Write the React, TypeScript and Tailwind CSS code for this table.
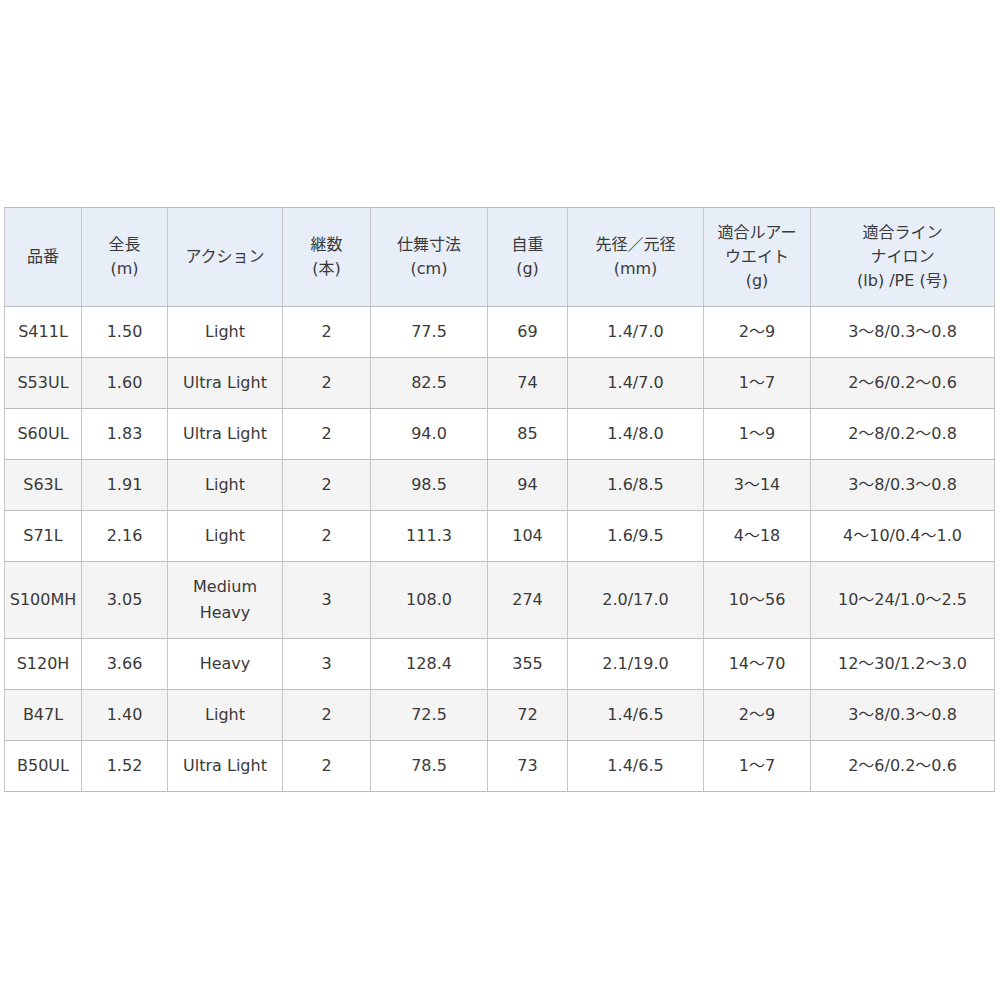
const rows = [
    ['S411L', '1.50', 'Light', '2', '77.5', '69', '1.4/7.0', '2～9', '3～8/0.3～0.8'],
    ['S53UL', '1.60', 'Ultra Light', '2', '82.5', '74', '1.4/7.0', '1～7', '2～6/0.2～0.6'],
    ['S60UL', '1.83', 'Ultra Light', '2', '94.0', '85', '1.4/8.0', '1～9', '2～8/0.2～0.8'],
    ['S63L', '1.91', 'Light', '2', '98.5', '94', '1.6/8.5', '3～14', '3～8/0.3～0.8'],
    ['S71L', '2.16', 'Light', '2', '111.3', '104', '1.6/9.5', '4～18', '4～10/0.4～1.0'],
    ['S100MH', '3.05', 'Medium\nHeavy', '3', '108.0', '274', '2.0/17.0', '10～56', '10～24/1.0～2.5'],
    ['S120H', '3.66', 'Heavy', '3', '128.4', '355', '2.1/19.0', '14～70', '12～30/1.2～3.0'],
    ['B47L', '1.40', 'Light', '2', '72.5', '72', '1.4/6.5', '2～9', '3～8/0.3～0.8'],
    ['B50UL', '1.52', 'Ultra Light', '2', '78.5', '73', '1.4/6.5', '1～7', '2～6/0.2～0.6'],
];

const headers = [
    ['品番'],
    ['全長', '(m)'],
    ['アクション'],
    ['継数', '(本)'],
    ['仕舞寸法', '(cm)'],
    ['自重', '(g)'],
    ['先径／元径', '(mm)'],
    ['適合ルアー', 'ウエイト', '(g)'],
    ['適合ライン', 'ナイロン', '(lb) /PE (号)'],
];

const widths = ['w-[77px]', 'w-[86px]', 'w-[115px]', 'w-[88px]', 'w-[117px]', 'w-[80px]', 'w-[136px]', 'w-[107px]', 'w-[184px]'];

const cell = 'border-x border-solid border-x-[#c6c6c6] border-y border-y-dotted border-y-[#bdbdbd] p-0 text-center align-middle';

export default function App() {
    return (
        <div className="min-h-[1000px] bg-white pt-[207px] pl-[4px] font-['DejaVu_Sans','Noto_Sans_CJK_JP',sans-serif] text-[16px] text-[#3a3a3a]">
            <table className="w-[990px] table-fixed border-collapse border border-solid border-[#bcbcbc]">
                <colgroup>
                    {widths.map((w, i) => (
                        <col key={i} className={w} />
                    ))}
                </colgroup>
                <thead>
                    <tr className="h-[99px] bg-[#e7eef8]">
                        {headers.map((lines, i) => (
                            <th key={i} className={`${cell} font-normal leading-[24px]`}>
                                {lines.map((l, j) => (
                                    <div key={j}>{l}</div>
                                ))}
                            </th>
                        ))}
                    </tr>
                </thead>
                <tbody>
                    {rows.map((r, i) => (
                        <tr key={r[0]} className={`${r[2].includes('\n') ? 'h-[77px]' : 'h-[51px]'} ${i % 2 === 1 ? 'bg-[#f4f4f4]' : 'bg-white'}`}>
                            {r.map((v, j) => (
                                <td key={j} className={`${cell} whitespace-pre-line leading-[26px]`}>
                                    {v}
                                </td>
                            ))}
                        </tr>
                    ))}
                </tbody>
            </table>
        </div>
    );
}
